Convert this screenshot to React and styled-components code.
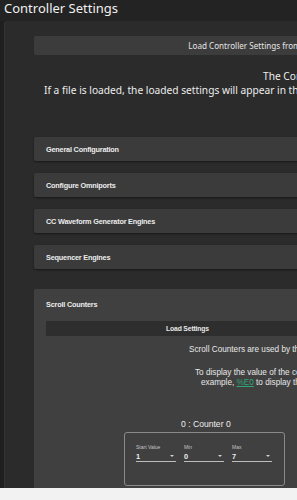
import React from "react";
import styled, { createGlobalStyle } from "styled-components";

const GlobalStyle = createGlobalStyle`
    html, body {
        margin: 0;
        padding: 0;
        background: #f2f2f2;
        overflow: hidden;
    }
`;

const Page = styled.div`
    width: 560px;
    height: 488px;
    overflow: hidden;
    background: #1f1f1f;
    font-family: "Noto Sans", "Open Sans", sans-serif;
    color: #e8e8e8;
    display: flex;
    flex-direction: column;
`;

const Header = styled.h1`
    margin: 0;
    height: 21px;
    padding-left: 4px;
    background: #232323;
    font-size: 13px;
    font-weight: 400;
    line-height: 16px;
    color: #f0f0f0;
`;

const Panel = styled.div`
    flex: 1;
    margin-left: 4px;
    background: #2b2b2b;
    border-left: 1px solid #333;
    border-top-left-radius: 3px;
    padding: 15px 30px 0 29px;
    display: flex;
    flex-direction: column;
`;

const WideButton = styled.div`
    height: 19px;
    background: #3c3c3c;
    border-radius: 2px;
    display: flex;
    align-items: center;
    justify-content: center;
    font-size: 8.1px;
    color: #e4e4e4;
    width: ${(props) => props.$width || "auto"};
`;

const Intro = styled.p`
    margin: 0;
    font-size: 10.2px;
    line-height: 14px;
    color: #ededed;
    padding-left: ${(props) => props.$indent}px;
    white-space: nowrap;
`;

const IntroBlock = styled.div`
    margin-top: 14px;
    margin-bottom: 40px;
`;

const Accordion = styled.div`
    height: 24px;
    background: #3b3b3b;
    border-radius: 2px;
    box-shadow: 0 1px 2px rgba(0, 0, 0, 0.45);
    margin-bottom: 12px;
    display: flex;
    align-items: center;
    padding-left: 12px;
    font-family: "Liberation Sans", Arial, sans-serif;
    font-weight: 700;
    font-size: 7.3px;
    letter-spacing: -0.2px;
    color: #ececec;
`;

const Section = styled.div`
    flex: 1;
    margin-top: 8px;
    background: #404040;
    border-top-left-radius: 2px;
    padding: 12px 0 0 12px;
    display: flex;
    flex-direction: column;
    font-family: "Liberation Sans", Arial, sans-serif;
`;

const SectionTitle = styled.div`
    font-weight: 700;
    font-size: 7.3px;
    letter-spacing: -0.2px;
    line-height: 8px;
    color: #ececec;
    margin-bottom: 12px;
`;

const LoadButton = styled.div`
    width: 283px;
    height: 15px;
    background: #2e2e2e;
    display: flex;
    align-items: center;
    justify-content: center;
    font-weight: 700;
    font-size: 6.8px;
    letter-spacing: -0.15px;
    color: #e8e8e8;
`;

const Note = styled.p`
    margin: 0;
    font-size: 8.2px;
    line-height: 10px;
    color: #e8e8e8;
    white-space: nowrap;
    padding-left: ${(props) => props.$indent}px;
    margin-top: ${(props) => props.$top || 0}px;
`;

const Link = styled.span`
    color: #2fa57a;
    text-decoration: underline;
`;

const CounterName = styled.div`
    margin-top: 31px;
    padding-left: 135px;
    font-size: 8.6px;
    line-height: 10px;
    color: #ececec;
`;

const CounterBox = styled.div`
    margin: 3px 0 0 78px;
    width: 161px;
    height: 54px;
    border: 1px solid #8a8a8a;
    border-radius: 3px;
    display: flex;
    gap: 8px;
    padding: 11px 0 0 11px;
    box-sizing: border-box;
`;

const Field = styled.div`
    width: 40px;
    display: flex;
    flex-direction: column;
`;

const FieldLabel = styled.span`
    font-size: 5px;
    line-height: 7px;
    color: #c4c4c4;
`;

const FieldValue = styled.div`
    display: flex;
    justify-content: space-between;
    align-items: center;
    height: 10px;
    border-bottom: 1px solid #bdbdbd;
    font-size: 7.4px;
    font-weight: 700;
    color: #eeeeee;
    padding-right: 2px;
`;

const Arrow = styled.span`
    width: 0;
    height: 0;
    border-left: 2.5px solid transparent;
    border-right: 2.5px solid transparent;
    border-top: 2.5px solid #d0d0d0;
`;

const sections = [
    "General Configuration",
    "Configure Omniports",
    "CC Waveform Generator Engines",
    "Sequencer Engines",
];

const fields = [
    { label: "Start Value", value: "1" },
    { label: "Min", value: "0" },
    { label: "Max", value: "7" },
];

function App() {
    return (
        <Page>
            <GlobalStyle />
            <Header>Controller Settings</Header>
            <Panel>
                <WideButton $width="436px">Load Controller Settings from File</WideButton>
                <IntroBlock>
                    <Intro $indent={229}>The Controller Settings are loaded from a file.</Intro>
                    <Intro $indent={10}>If a file is loaded, the loaded settings will appear in the sections below.</Intro>
                </IntroBlock>
                {sections.map((name) => (
                    <Accordion key={name}>{name}</Accordion>
                ))}
                <Section>
                    <SectionTitle>Scroll Counters</SectionTitle>
                    <LoadButton>Load Settings</LoadButton>
                    <Note $indent={143} $top={9}>Scroll Counters are used by the Scroll function.</Note>
                    <Note $indent={149} $top={13}>To display the value of the counter, use %E followed by the number. For</Note>
                    <Note $indent={155}>example, <Link>%E0</Link> to display the value of counter 0.</Note>
                    <CounterName>0 : Counter 0</CounterName>
                    <CounterBox>
                        {fields.map((f) => (
                            <Field key={f.label}>
                                <FieldLabel>{f.label}</FieldLabel>
                                <FieldValue>
                                    {f.value}
                                    <Arrow />
                                </FieldValue>
                            </Field>
                        ))}
                    </CounterBox>
                </Section>
            </Panel>
        </Page>
    );
}

export default App;
